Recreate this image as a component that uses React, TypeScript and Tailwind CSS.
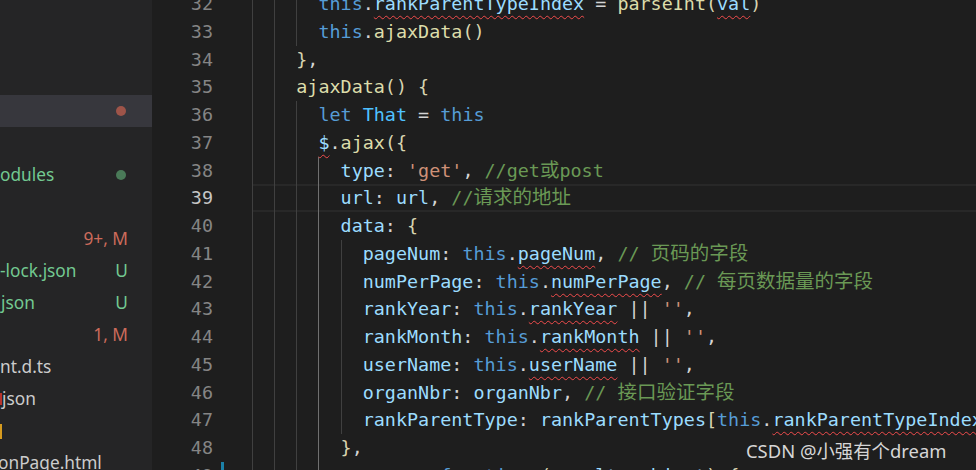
import React from "react";

type Kind = "kw" | "pr" | "fn" | "pu" | "br" | "st" | "cm" | "cl";
type Tok = { t: string; k: Kind; sq?: boolean };

const colorCls: Record<Kind, string> = {
  kw: "text-[#569cd6]",
  pr: "text-[#9cdcfe]",
  fn: "text-[#dcdcaa]",
  pu: "text-[#d4d4d4]",
  br: "text-[#d8d4b0]",
  st: "text-[#ce9178]",
  cm: "text-[#6a9955]",
  cl: "text-[#4fc1ff]",
};

const kw = (t: string): Tok => ({ t, k: "kw" });
const pr = (t: string, sq = false): Tok => ({ t, k: "pr", sq });
const fn = (t: string): Tok => ({ t, k: "fn" });
const pu = (t: string): Tok => ({ t, k: "pu" });
const br = (t: string): Tok => ({ t, k: "br" });
const st = (t: string): Tok => ({ t, k: "st" });
const cm = (t: string): Tok => ({ t, k: "cm" });
const cl = (t: string): Tok => ({ t, k: "cl" });

type Line = { n: number; indent: number; toks: Tok[] };

const lines: Line[] = [
  { n: 32, indent: 6, toks: [kw("this"), pu("."), pr("rankParentTypeIndex", true), pu(" = "), fn("parseInt"), br("("), pr("val", true), br(")")] },
  { n: 33, indent: 6, toks: [kw("this"), pu("."), fn("ajaxData"), br("()")] },
  { n: 34, indent: 4, toks: [br("}"), pu(",")] },
  { n: 35, indent: 4, toks: [fn("ajaxData"), br("()"), pu(" "), br("{")] },
  { n: 36, indent: 6, toks: [kw("let"), pu(" "), cl("That"), pu(" = "), kw("this")] },
  { n: 37, indent: 6, toks: [pr("$", true), pu("."), fn("ajax"), br("({")] },
  { n: 38, indent: 8, toks: [pr("type"), pu(": "), st("'get'"), pu(", "), cm("//get或post")] },
  { n: 39, indent: 8, toks: [pr("url"), pu(": "), pr("url"), pu(", "), cm("//请求的地址")] },
  { n: 40, indent: 8, toks: [pr("data"), pu(": "), br("{")] },
  { n: 41, indent: 10, toks: [pr("pageNum"), pu(": "), kw("this"), pu("."), pr("pageNum", true), pu(", "), cm("// 页码的字段")] },
  { n: 42, indent: 10, toks: [pr("numPerPage"), pu(": "), kw("this"), pu("."), pr("numPerPage", true), pu(", "), cm("// 每页数据量的字段")] },
  { n: 43, indent: 10, toks: [pr("rankYear"), pu(": "), kw("this"), pu("."), pr("rankYear", true), pu(" || "), st("''"), pu(",")] },
  { n: 44, indent: 10, toks: [pr("rankMonth"), pu(": "), kw("this"), pu("."), pr("rankMonth", true), pu(" || "), st("''"), pu(",")] },
  { n: 45, indent: 10, toks: [pr("userName"), pu(": "), kw("this"), pu("."), pr("userName", true), pu(" || "), st("''"), pu(",")] },
  { n: 46, indent: 10, toks: [pr("organNbr"), pu(": "), pr("organNbr"), pu(", "), cm("// 接口验证字段")] },
  { n: 47, indent: 10, toks: [pr("rankParentType"), pu(": "), pr("rankParentTypes"), br("["), kw("this"), pu("."), pr("rankParentTypeIndex", true), br("]"), pu(",")] },
  { n: 48, indent: 8, toks: [br("}"), pu(",")] },
  { n: 49, indent: 8, toks: [pr("success"), pu(": "), kw("function"), pu(" "), br("("), pr("result"), pu(", "), pr("object"), br(")"), pu(" "), br("{")] },
];

function renderText(s: string) {
  const parts = s.split(/([\u3400-\u9fff]+)/);
  return parts.map((p, i) =>
    /[\u3400-\u9fff]/.test(p) ? (
      <span key={i} className="font-['Noto_Sans_CJK_SC',sans-serif] text-[19.5px] leading-none">
        {p}
      </span>
    ) : (
      <React.Fragment key={i}>{p}</React.Fragment>
    )
  );
}

function CodeLine({ line }: { line: Line }) {
  const active = line.n === 39;
  const guides = [];
  for (let g = 0; g < line.indent / 2; g++) {
    const isActive = g === 3 && line.n >= 38;
    guides.push(
      <span
        key={g}
        className={
          "h-full w-[2ch] shrink-0 " +
          (isActive ? "shadow-[inset_1px_0_0_#707070]" : "shadow-[inset_1px_0_0_#404040]")
        }
      />
    );
  }
  return (
    <div className="flex h-[27.75px]">
      <div className={"w-[61px] shrink-0 text-right " + (active ? "text-[#c6c6c6]" : "text-[#858585]")}>{line.n}</div>
      <div className="w-[39.5px] shrink-0">
        {line.n === 49 && <div className="ml-[8px] h-full w-[3px] bg-[#1b81a8]" />}
      </div>
      <div
        className={
          "flex min-w-0 flex-1 -ml-[0.5px] " +
          (active ? "shadow-[inset_0_2px_0_#282828,inset_0_-2px_0_#282828]" : "")
        }
      >
        {guides}
        <span className="whitespace-pre">
          {line.toks.map((tk, i) => (
            <span
              key={i}
              className={
                colorCls[tk.k] +
                (tk.sq ? " underline decoration-wavy decoration-[#f14c4c] decoration-1 underline-offset-[5px]" : "")
              }
            >
              {renderText(tk.t)}
            </span>
          ))}
        </span>
      </div>
    </div>
  );
}

type Row = {
  text?: string;
  textCls?: string;
  sliver?: string;
  badge?: string;
  badgeCls?: string;
  dot?: string;
  selected?: boolean;
};

const rows: Row[] = [
  {},
  {},
  {},
  { selected: true, dot: "bg-[#9e5449]" },
  {},
  { text: "odules", textCls: "text-[#73c991]", dot: "bg-[#4a7a58]" },
  {},
  { badge: "9+, M", badgeCls: "text-[#cc6b5b]" },
  { text: "-lock.json", textCls: "text-[#73c991]", badge: "U", badgeCls: "text-[#73c991]" },
  { text: "json", textCls: "text-[#73c991] ml-[1px]", badge: "U", badgeCls: "text-[#73c991]" },
  { badge: "1, M", badgeCls: "text-[#cc6b5b]" },
  { text: "nt.d.ts", textCls: "text-[#cccccc]" },
  { text: "json", textCls: "text-[#cccccc]", sliver: "bg-[#b8342c] h-[12px]" },
  { sliver: "bg-[#d69b1f] h-[15px]" },
  { text: "onPage.html", textCls: "text-[#cccccc] -ml-[2px]" },
];

export default function App() {
  return (
    <div className="relative flex h-[470px] w-[976px] overflow-hidden bg-[#1e1e1e]">
      {/* Explorer sidebar */}
      <div className="h-full w-[152px] shrink-0 bg-[#252526] font-['Noto_Sans',sans-serif] text-[17.3px]">
        <div className="-mt-[1px]">
          {rows.map((r, i) => (
            <div
              key={i}
              className={"flex h-8 items-center justify-between pr-[24px] " + (r.selected ? "bg-[#37373d]" : "")}
            >
              <div className="flex min-w-0 items-center whitespace-nowrap">
                {r.sliver && <span className={"w-[2px] shrink-0 " + r.sliver} />}
                {r.text && <span className={r.textCls}>{r.text}</span>}
              </div>
              {r.badge && <span className={"whitespace-nowrap " + r.badgeCls}>{r.badge}</span>}
              {r.dot && <span className={"mr-[2px] h-[10px] w-[10px] rounded-full " + r.dot} />}
            </div>
          ))}
        </div>
      </div>

      {/* Editor */}
      <div className="h-full min-w-0 flex-1 overflow-hidden font-['DejaVu_Sans_Mono','Noto_Sans_CJK_SC',monospace] text-[18.4px] leading-[27.75px]">
        <div className="-mt-[10px]">
          {lines.map((l) => (
            <CodeLine key={l.n} line={l} />
          ))}
        </div>
      </div>

      {/* watermark */}
      <div className="pointer-events-none absolute left-[746px] top-[437px] whitespace-nowrap font-['Noto_Sans','Noto_Sans_CJK_SC',sans-serif] text-[18.4px] leading-[28px] text-[#d6d6d6]">
        CSDN @小强有个dream
      </div>
    </div>
  );
}
